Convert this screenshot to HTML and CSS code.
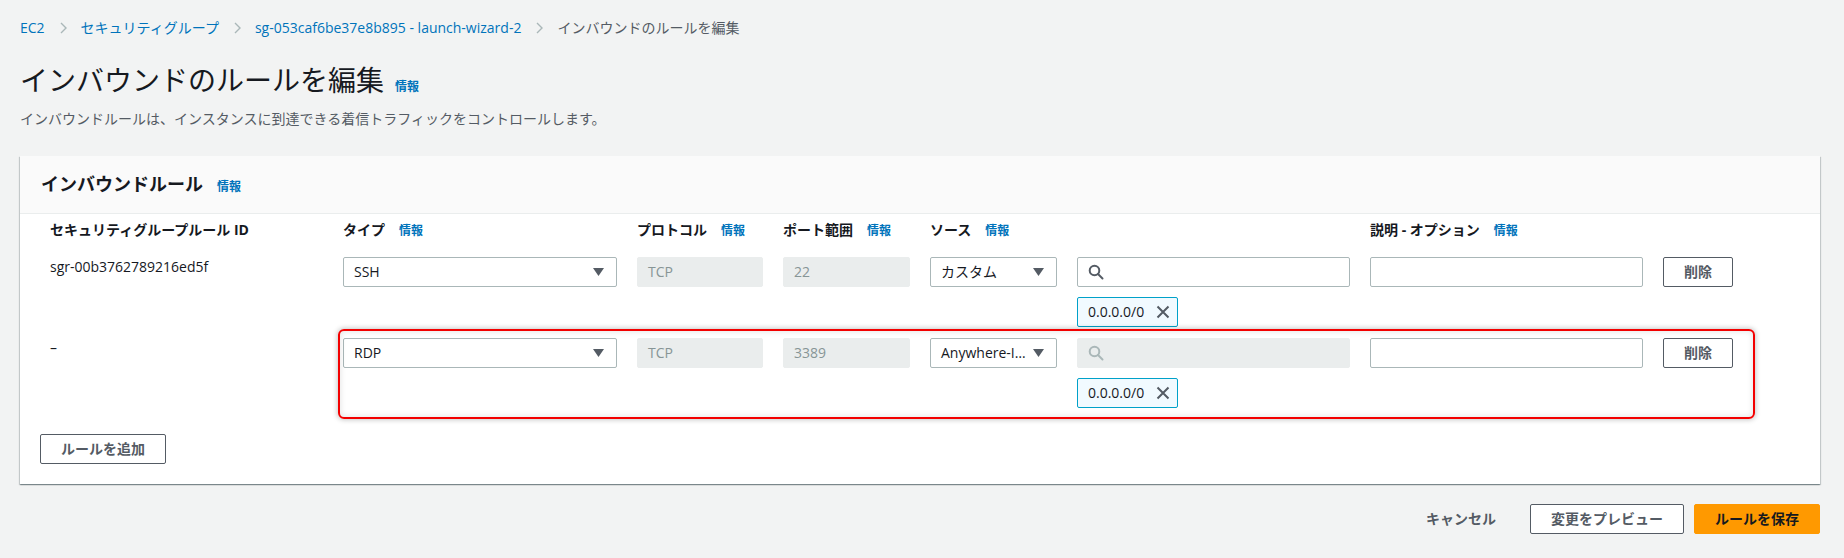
FILE: index.html
```html
<!DOCTYPE html>
<html lang="ja">
<head>
<meta charset="utf-8">
<title>インバウンドのルールを編集</title>
<link rel="stylesheet" href="styles.css">
</head>
<body>
<div class="page">
  <nav class="crumbs">
    <a class="crumb-link" href="#">EC2</a>
    <span class="sep"><svg viewBox="0 0 7 12"><path d="M1 1l5 5-5 5"/></svg></span>
    <a class="crumb-link" href="#">セキュリティグループ</a>
    <span class="sep"><svg viewBox="0 0 7 12"><path d="M1 1l5 5-5 5"/></svg></span>
    <a class="crumb-link" href="#">sg-053caf6be37e8b895 - launch-wizard-2</a>
    <span class="sep"><svg viewBox="0 0 7 12"><path d="M1 1l5 5-5 5"/></svg></span>
    <span class="crumb-current">インバウンドのルールを編集</span>
  </nav>

  <h1 class="title">インバウンドのルールを編集<a class="info" href="#">情報</a></h1>
  <p class="desc">インバウンドルールは、インスタンスに到達できる着信トラフィックをコントロールします。</p>

  <section class="panel">
    <header class="panel-head">
      <h2>インバウンドルール</h2><a class="info" href="#">情報</a>
    </header>
    <div class="panel-body">
      <div class="grid heads">
        <div class="lab">セキュリティグループルール ID</div>
        <div class="lab">タイプ<a class="info" href="#">情報</a></div>
        <div class="lab">プロトコル<a class="info" href="#">情報</a></div>
        <div class="lab">ポート範囲<a class="info" href="#">情報</a></div>
        <div class="lab">ソース<a class="info" href="#">情報</a></div>
        <div class="lab"></div>
        <div class="lab">説明 - オプション<a class="info" href="#">情報</a></div>
        <div class="lab"></div>
      </div>

      <div class="rows">
        <div class="grid rule">
          <div class="rid">sgr-00b3762789216ed5f</div>
          <div class="select"><span class="val">SSH</span><svg class="caret" viewBox="0 0 11 8"><path d="M0 0h11L5.5 8z"/></svg></div>
          <div class="field disabled">TCP</div>
          <div class="field disabled">22</div>
          <div class="select"><span class="val">カスタム</span><svg class="caret" viewBox="0 0 11 8"><path d="M0 0h11L5.5 8z"/></svg></div>
          <div class="srccell">
            <div class="field search"><svg class="mag" viewBox="0 0 16 16"><circle cx="6.5" cy="6.5" r="4.8"/><path d="M10 10l4.5 4.5"/></svg></div>
            <div class="token"><span>0.0.0.0/0</span><svg class="xicon" viewBox="0 0 14 14"><path d="M1.5 1.5l11 11M12.5 1.5l-11 11"/></svg></div>
          </div>
          <div class="field"></div>
          <div><button class="btn">削除</button></div>
        </div>

        <div class="grid rule">
          <div class="rid">–</div>
          <div class="select"><span class="val">RDP</span><svg class="caret" viewBox="0 0 11 8"><path d="M0 0h11L5.5 8z"/></svg></div>
          <div class="field disabled">TCP</div>
          <div class="field disabled">3389</div>
          <div class="select"><span class="val">Anywhere-I…</span><svg class="caret" viewBox="0 0 11 8"><path d="M0 0h11L5.5 8z"/></svg></div>
          <div class="srccell">
            <div class="field search disabled"><svg class="mag" viewBox="0 0 16 16"><circle cx="6.5" cy="6.5" r="4.8"/><path d="M10 10l4.5 4.5"/></svg></div>
            <div class="token"><span>0.0.0.0/0</span><svg class="xicon" viewBox="0 0 14 14"><path d="M1.5 1.5l11 11M12.5 1.5l-11 11"/></svg></div>
          </div>
          <div class="field"></div>
          <div><button class="btn">削除</button></div>
          <div class="highlight"></div>
        </div>
      </div>

      <button class="btn add">ルールを追加</button>
    </div>
  </section>

  <div class="actions">
    <button class="btn btn-link">キャンセル</button>
    <button class="btn">変更をプレビュー</button>
    <button class="btn btn-primary">ルールを保存</button>
  </div>
</div>
</body>
</html>
```

FILE: styles.css
```css
* { box-sizing: border-box; }
html, body { margin: 0; }
body {
  background: #f2f3f3;
  color: #16191f;
  font-family: "Open Sans", "Noto Sans CJK JP", sans-serif;
  font-size: 14px;
  line-height: 20px;
}
.page { padding: 18px 24px 24px 20px; }

.crumbs { display: flex; align-items: center; height: 20px; white-space: nowrap; }
.crumb-link { color: #0073bb; text-decoration: none; }
.crumb-current { color: #545b64; }
.sep { display: flex; align-items: center; padding: 0 14px 0 15px; }
.sep svg { display: block; width: 7px; height: 12px; }
.sep path { fill: none; stroke: #aab7b8; stroke-width: 1.4; }

.title { margin: 24px 0 0; font-size: 28px; line-height: 36px; font-weight: 400; color: #16191f; }
.info {
  color: #0073bb;
  font-size: 12px;
  line-height: 12px;
  font-weight: 700;
  text-decoration: none;
  margin-left: 14px;
}
.title .info { margin-left: 11px; }
.desc { margin: 11px 0 0; color: #545b64; }

.panel {
  margin-top: 27px;
  background: #fff;
  box-shadow: 0 1px 1px 0 rgba(0, 28, 36, .3), 1px 1px 1px 0 rgba(0, 28, 36, .15), -1px 1px 1px 0 rgba(0, 28, 36, .15);
}
.panel-head {
  background: #fafafa;
  border-bottom: 1px solid #eaeded;
  padding: 16px 21px 17px;
  line-height: 24px;
  height: 58px;
}
.panel-head h2 { display: inline; margin: 0; font-size: 18px; line-height: 24px; font-weight: 700; }
.panel-body { padding: 6px 20px 20px; }

.grid {
  display: grid;
  grid-template-columns: 273px 274px 126px 127px 127px 273px 273px 71px;
  column-gap: 20px;
  margin-left: 10px;
}
.lab { font-weight: 700; white-space: nowrap; height: 20px; }

.rows { margin-top: 17px; display: flex; flex-direction: column; gap: 11px; }
.rule { position: relative; align-items: start; }
.rid { line-height: 20px; }

.select {
  height: 30px;
  border: 1px solid #aab7b8;
  border-radius: 2px;
  background: #fff;
  display: flex;
  align-items: center;
  justify-content: space-between;
  padding: 0 12px 0 10px;
  white-space: nowrap;
}
.caret { width: 11px; height: 8px; flex: none; fill: #545b64; }

.field {
  height: 30px;
  border: 1px solid #aab7b8;
  border-radius: 2px;
  background: #fff;
  padding: 0 10px;
  display: flex;
  align-items: center;
}
.field.disabled { background: #eaeded; border-color: #eaeded; color: #879596; }

.mag { width: 16px; height: 16px; fill: none; stroke: #545b64; stroke-width: 2; stroke-linecap: round; }
.search.disabled .mag { stroke: #aab7b8; }

.token {
  margin-top: 10px;
  display: inline-flex;
  align-items: center;
  gap: 12px;
  height: 30px;
  border: 1px solid #00a1c9;
  border-radius: 2px;
  background: #f1faff;
  padding: 0 7px 0 10px;
}
.xicon { width: 14px; height: 14px; fill: none; stroke: #545b64; stroke-width: 2; }

.btn {
  height: 30px;
  padding: 4px 20px;
  border: 1px solid #545b64;
  border-radius: 2px;
  background: #fff;
  color: #545b64;
  font-family: inherit;
  font-size: 14px;
  font-weight: 700;
  line-height: 20px;
  white-space: nowrap;
}
.add { margin-top: 26px; }

.highlight {
  position: absolute;
  left: 288px;
  top: -9px;
  width: 1417px;
  height: 90px;
  border: 2px solid #f30000;
  border-radius: 6px;
  box-shadow: 0 0 5px 1px rgba(0, 0, 0, .22), inset 0 0 6px rgba(0, 0, 0, .12);
  pointer-events: none;
}

.actions {
  display: flex;
  justify-content: flex-end;
  align-items: center;
  gap: 10px;
  margin-top: 20px;
}
.btn-link { border-color: transparent; background: transparent; margin-right: 3px; }
.btn-primary { background: #ff9900; border-color: #ff9900; color: #16191f; }
```
